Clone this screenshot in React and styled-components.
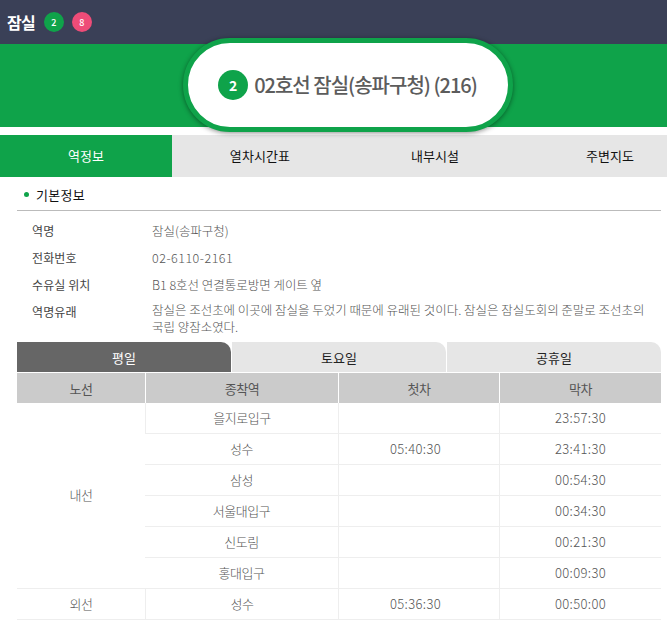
import React from "react"
import styled, { createGlobalStyle } from "styled-components"

const GlobalStyle = createGlobalStyle`
  html, body {
    margin: 0;
    padding: 0;
    background: #fff;
    font-family: "Noto Sans CJK KR", "Noto Sans", sans-serif;
    overflow-x: hidden;
  }
  * { box-sizing: border-box; }
`

const Page = styled.div`
  width: 667px;
  height: 641px;
  overflow: hidden;
`

const TopBar = styled.header`
  height: 44px;
  background: #3a4057;
  display: flex;
  align-items: center;
  padding: 0 7px;
`

const TopTitle = styled.h1`
  margin: 0 9px 0 0;
  font-size: 16px;
  font-weight: 700;
  letter-spacing: -0.8px;
  color: #fff;
`

const LineBadge = styled.span`
  width: 20px;
  height: 20px;
  margin-right: 8px;
  border-radius: 50%;
  background: ${p => p.$color};
  color: #fff;
  font-size: 9px;
  font-weight: 500;
  display: flex;
  align-items: center;
  justify-content: center;
`

const Banner = styled.div`
  height: 83px;
  background: #0fa34a;
  display: flex;
  justify-content: center;
  margin-bottom: 8px;
`

const Pill = styled.div`
  width: 330px;
  height: 94px;
  margin-top: -6px;
  margin-left: 28px;
  flex: none;
  position: relative;
  z-index: 1;
  border: 5px solid #0fa34a;
  border-radius: 47px;
  background: #fff;
  box-shadow: 0 1px 5px rgba(0, 0, 0, 0.45);
  display: flex;
  align-items: center;
  justify-content: center;
  gap: 6px;
`

const PillBadge = styled.span`
  width: 30px;
  height: 30px;
  border-radius: 50%;
  background: #0fa34a;
  color: #fff;
  font-size: 14px;
  font-weight: 700;
  display: flex;
  align-items: center;
  justify-content: center;
`

const PillText = styled.span`
  font-size: 20px;
  font-weight: 500;
  letter-spacing: -1px;
  color: #5c5c5c;
  position: relative;
  top: -1px;
`

const TabRow = styled.nav`
  display: flex;
  height: 42px;
  background: #e6e6e6;
  overflow: hidden;
`

const Tab = styled.div`
  flex: none;
  width: ${p => p.$width}px;
  padding-bottom: 2px;
  display: flex;
  align-items: center;
  justify-content: center;
  font-size: 13px;
  letter-spacing: 0.1px;
  color: ${p => (p.$active ? "#fff" : "#111")};
  background: ${p => (p.$active ? "#0fa34a" : "transparent")};
`

const Content = styled.main`
  padding: 0 6px 0 17px;
`

const SectionHead = styled.h2`
  margin: 0;
  height: 34px;
  padding: 2px 0 0 7px;
  border-bottom: 1px solid #bbb;
  display: flex;
  align-items: center;
  gap: 7px;
  font-size: 13px;
  font-weight: 400;
  letter-spacing: 0.3px;
  color: #111;
  &::before {
    content: "";
    width: 5px;
    height: 5px;
    border-radius: 50%;
    background: #0fa34a;
  }
`

const InfoList = styled.dl`
  margin: 10px 0 0;
  padding-left: 15px;
  display: grid;
  grid-template-columns: 120px 1fr;
  row-gap: 7px;
`

const InfoLabel = styled.dt`
  font-size: 12px;
  line-height: 20px;
  letter-spacing: 0.1px;
  color: #444;
`

const InfoValue = styled.dd`
  margin: 0;
  max-width: 500px;
  font-size: 12.5px;
  font-weight: 300;
  line-height: 20px;
  letter-spacing: ${p => (p.$digits ? "0.5px" : "-0.02px")};
  color: #555;
  &:last-child {
    line-height: 17px;
    margin-top: -1px;
  }
`

const DayTabs = styled.div`
  display: grid;
  grid-template-columns: repeat(3, 214px);
  column-gap: 1px;
  margin-top: 7px;
`

const DayTab = styled.div`
  height: 30px;
  border-radius: 0 10px 0 0;
  display: flex;
  align-items: center;
  justify-content: center;
  font-size: 13px;
  color: ${p => (p.$active ? "#fff" : "#222")};
  background: ${p => (p.$active ? "#666" : "#e6e6e6")};
`

const Table = styled.table`
  width: 644px;
  margin-top: 1px;
  border-collapse: separate;
  border-spacing: 0;
  table-layout: fixed;
  font-size: 13px;
  font-weight: 300;
  letter-spacing: -0.5px;
  color: #555;
`

const HeadCell = styled.th`
  height: 30px;
  padding: 0;
  background: #cbcbcb;
  border-left: 1px solid #fff;
  font-weight: 400;
  color: #555;
  &:first-child { border-left: 0; }
`

const Cell = styled.td`
  height: 31px;
  padding: 0 0 2px;
  text-align: center;
  border-left: 1px solid #eee;
  border-bottom: 1px solid #eee;
  &:first-child { border-left: 0; }
`

const TimeCell = styled(Cell)`
  letter-spacing: 0.35px;
  padding-right: ${p => (p.$first ? "7px" : "0")};
`

const inner = [
  ["을지로입구", "", "23:57:30"],
  ["성수", "05:40:30", "23:41:30"],
  ["삼성", "", "00:54:30"],
  ["서울대입구", "", "00:34:30"],
  ["신도림", "", "00:21:30"],
  ["홍대입구", "", "00:09:30"],
]

export default function App() {
  return (
    <Page>
      <GlobalStyle />
      <TopBar>
        <TopTitle>잠실</TopTitle>
        <LineBadge $color="#0fa34a">2</LineBadge>
        <LineBadge $color="#ee4c78">8</LineBadge>
      </TopBar>
      <Banner>
        <Pill>
          <PillBadge>2</PillBadge>
          <PillText>02호선 잠실(송파구청) (216)</PillText>
        </Pill>
      </Banner>
      <TabRow>
        <Tab $width={172} $active>역정보</Tab>
        <Tab $width={176}>열차시간표</Tab>
        <Tab $width={174}>내부시설</Tab>
        <Tab $width={176}>주변지도</Tab>
      </TabRow>
      <Content>
        <SectionHead>기본정보</SectionHead>
        <InfoList>
          <InfoLabel>역명</InfoLabel>
          <InfoValue>잠실(송파구청)</InfoValue>
          <InfoLabel>전화번호</InfoLabel>
          <InfoValue $digits>02-6110-2161</InfoValue>
          <InfoLabel>수유실 위치</InfoLabel>
          <InfoValue>B1 8호선 연결통로방면 게이트 옆</InfoValue>
          <InfoLabel>역명유래</InfoLabel>
          <InfoValue>잠실은 조선초에 이곳에 잠실을 두었기 때문에 유래된 것이다. 잠실은 잠실도회의 준말로 조선초의 국립 양잠소였다.</InfoValue>
        </InfoList>
        <DayTabs>
          <DayTab $active>평일</DayTab>
          <DayTab>토요일</DayTab>
          <DayTab>공휴일</DayTab>
        </DayTabs>
        <Table>
          <colgroup>
            <col style={{ width: 128 }} />
            <col style={{ width: 193 }} />
            <col style={{ width: 161 }} />
            <col style={{ width: 162 }} />
          </colgroup>
          <thead>
            <tr>
              <HeadCell>노선</HeadCell>
              <HeadCell>종착역</HeadCell>
              <HeadCell>첫차</HeadCell>
              <HeadCell>막차</HeadCell>
            </tr>
          </thead>
          <tbody>
            {inner.map((row, i) => (
              <tr key={row[0]}>
                {i === 0 && <Cell rowSpan={6}>내선</Cell>}
                <Cell>{row[0]}</Cell>
                <TimeCell $first>{row[1]}</TimeCell>
                <TimeCell>{row[2]}</TimeCell>
              </tr>
            ))}
            <tr>
              <Cell>외선</Cell>
              <Cell>성수</Cell>
              <TimeCell $first>05:36:30</TimeCell>
              <TimeCell>00:50:00</TimeCell>
            </tr>
          </tbody>
        </Table>
      </Content>
    </Page>
  )
}
